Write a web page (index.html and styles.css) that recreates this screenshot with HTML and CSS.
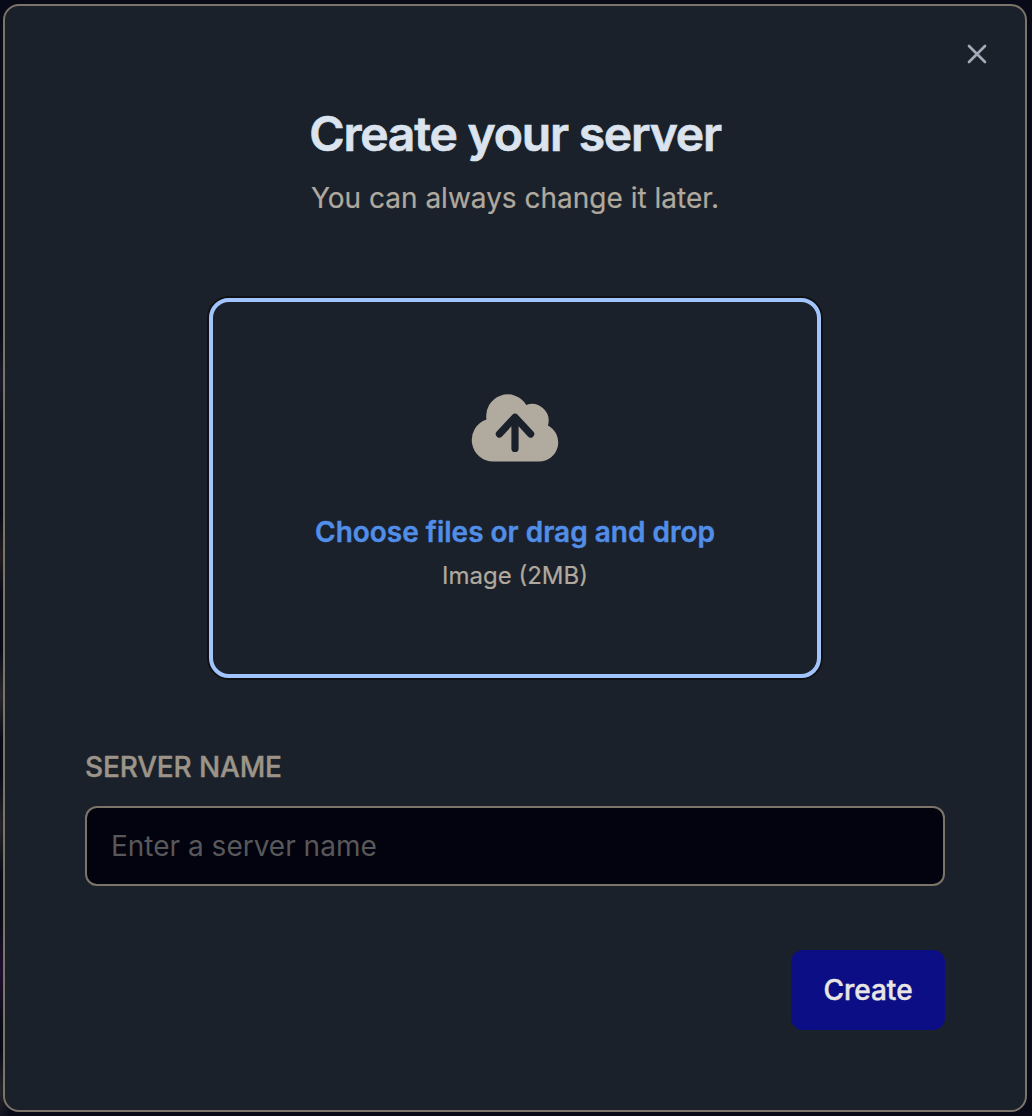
FILE: index.html
```html
<!DOCTYPE html>
<html lang="en">
<head>
<meta charset="utf-8">
<title>Create your server</title>
<link rel="stylesheet" href="styles.css">
</head>
<body>
<main class="dialog">
  <button class="close" type="button" aria-label="Close">
    <svg viewBox="0 0 24 24" width="32" height="32" fill="none" stroke="currentColor" stroke-width="2" stroke-linecap="round" stroke-linejoin="round"><path d="M18 6 6 18M6 6l12 12"/></svg>
  </button>
  <header class="heading">
    <h1 class="title">Create your server</h1>
    <p class="subtitle">You can always change it later.</p>
  </header>
  <section class="dropzone">
    <svg class="cloud" viewBox="0 0 20 20" width="96" height="96"><path fill="currentColor" fill-rule="evenodd" clip-rule="evenodd" d="M5.5 17a4.5 4.5 0 0 1-1.44-8.765a4.5 4.5 0 0 1 8.302-3.046a3.5 3.5 0 0 1 4.504 4.272A4 4 0 0 1 15 17H5.5Zm3.75-2.75a.75.75 0 0 0 1.5 0V9.66l1.95 2.1a.75.75 0 1 0 1.1-1.02l-3.25-3.5a.75.75 0 0 0-1.1 0l-3.25 3.5a.75.75 0 1 0 1.1 1.02l1.95-2.1v4.59Z"/></svg>
    <span class="choose">Choose files or drag and drop</span>
    <span class="allowed">Image (2MB)</span>
  </section>
  <form class="form">
    <label class="label" for="name">SERVER NAME</label>
    <input class="input" id="name" type="text" placeholder="Enter a server name">
    <button class="create" type="button">Create</button>
  </form>
</main>
</body>
</html>
```
FILE: styles.css
```css
* { box-sizing: border-box; }
body {
  margin: 0;
  height: 1116px;
  padding: 4px 5px 4px 3px;
  overflow: hidden;
  background:
    radial-gradient(ellipse 12px 50px at 0 380px, #1b1b2b, transparent),
    radial-gradient(ellipse 12px 40px at 0 555px, #221d20, transparent),
    radial-gradient(ellipse 12px 45px at 0 695px, #2a2a2d, transparent),
    radial-gradient(ellipse 12px 50px at 0 825px, #26262a, transparent),
    radial-gradient(ellipse 12px 55px at 0 972px, #210f30, transparent),
    radial-gradient(ellipse 12px 40px at 0 1090px, #24232a, transparent),
    #080b17;
  font-family: Inter, sans-serif;
}
.dialog {
  position: relative;
  height: 1108px;
  padding: 98px 80px 0;
  display: flex;
  flex-direction: column;
  border: 2px solid #7b7468;
  border-radius: 16px;
  background: #1b212a;
}
.close {
  position: absolute;
  top: 32px;
  right: 32px;
  width: 32px;
  height: 32px;
  padding: 0;
  border: 0;
  background: none;
  color: #a3abb8;
}
.close svg { display: block; }
.heading { text-align: center; }
.title {
  margin: 0;
  font-size: 48px;
  line-height: 60px;
  font-weight: 600;
  letter-spacing: -1.2px;
  color: #dae3ee;
  -webkit-text-stroke: 0.7px #dae3ee;
}
.subtitle {
  margin: 14px 0 0;
  font-size: 28px;
  line-height: 40px;
  color: #b0a99f;
  -webkit-text-stroke: 0.2px #b0a99f;
}
.dropzone {
  align-self: center;
  width: 612px;
  height: 380px;
  margin-top: 80px;
  padding-top: 78px;
  display: flex;
  flex-direction: column;
  align-items: center;
  border: 4px solid #a0c4fb;
  border-radius: 20px;
  box-shadow: 0 0 0 2px #101114;
}
.cloud { display: block; color: #b0aa9f; }
.choose {
  margin-top: 32px;
  font-size: 28px;
  line-height: 48px;
  font-weight: 600;
  color: #518ee8;
  -webkit-text-stroke: 0.4px #518ee8;
}
.allowed {
  font-size: 24px;
  line-height: 40px;
  color: #b0a99f;
  -webkit-text-stroke: 0.2px #b0a99f;
}
.form {
  display: flex;
  flex-direction: column;
  margin-top: 69px;
}
.label {
  font-size: 28px;
  line-height: 40px;
  font-weight: 500;
  letter-spacing: -0.15px;
  color: #9c9488;
  -webkit-text-stroke: 0.4px #9c9488;
}
.input {
  height: 80px;
  margin-top: 19px;
  padding: 0 24px;
  border: 2px solid #7b7468;
  border-radius: 12px;
  outline: 0;
  background: #02030e;
  font: 400 28px/40px Inter, sans-serif;
  color: #e8e6e3;
}
.input::placeholder { color: #58585a; opacity: 1; }
.create {
  align-self: flex-end;
  width: 154px;
  height: 80px;
  margin-top: 64px;
  padding: 0;
  border: 0;
  border-radius: 12px;
  background: #0c0e86;
  font: 500 28px/40px Inter, sans-serif;
  color: #e8e6e3;
  -webkit-text-stroke: 0.4px #e8e6e3;
}
```
